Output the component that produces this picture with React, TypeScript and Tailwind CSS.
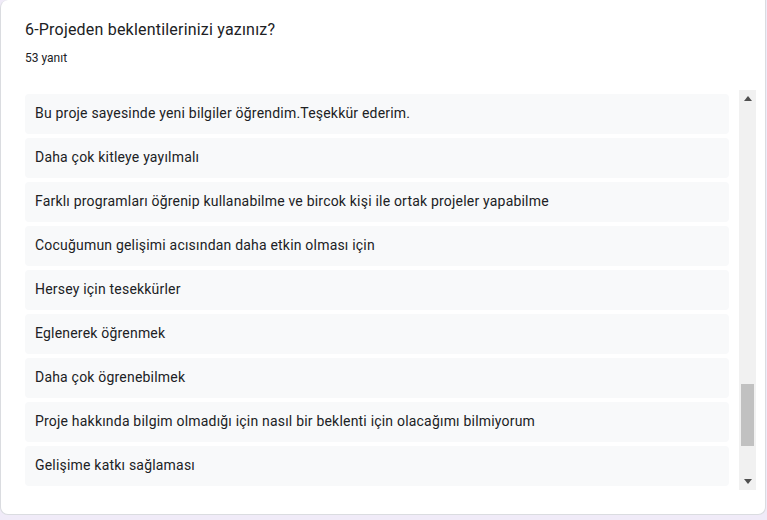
import React from "react";

const answers = [
  "Bu proje sayesinde yeni bilgiler öğrendim.Teşekkür ederim.",
  "Daha çok kitleye yayılmalı",
  "Farklı programları öğrenip kullanabilme ve bircok kişi ile ortak projeler yapabilme",
  "Cocuğumun gelişimi acısından daha etkin olması için",
  "Hersey için tesekkürler",
  "Eglenerek öğrenmek",
  "Daha çok ögrenebilmek",
  "Proje hakkında bilgim olmadığı için nasıl bir beklenti için olacağımı bilmiyorum",
  "Gelişime katkı sağlaması",
];

export default function App() {
  return (
    <div className="w-[767px] h-[520px] bg-[#f0ebf8] overflow-hidden" style={{ fontFamily: "Roboto, 'Liberation Sans', sans-serif" }}>
      <div className="w-[766px] h-[515px] bg-white border border-[#dadce0] border-t-0 rounded-b-lg rounded-tl-lg flex flex-col">
        <div className="pl-[24px] pt-[18px]">
          <div className="text-[16px] leading-[24px] text-[#202124] tracking-[0.2px]">
            6-Projeden beklentilerinizi yazınız?
          </div>
          <div className="text-[12px] leading-[16px] text-[#202124] mt-[8px]">53 yanıt</div>
        </div>
        <div className="flex mt-[24px] pl-[24px] pr-[9px] h-[400px]">
          <div className="flex-1 flex flex-col gap-[4px] pt-[4px] pr-[10px]">
            {answers.map((a) => (
              <div key={a} className="h-[40px] rounded-[4px] bg-[#f8f9fa] flex items-center pl-[10px] pb-[1px] text-[14px] text-[#202124] tracking-[0.2px]">
                {a}
              </div>
            ))}
          </div>
          <div className="w-[17px] h-[400px] bg-[#f1f1f1] flex flex-col items-center">
            <div className="h-[17px] flex items-center justify-center">
              <svg width="8" height="5" viewBox="0 0 8 5"><path d="M4 0 L8 5 L0 5 Z" fill="#505050" /></svg>
            </div>
            <div className="flex-1 w-full flex flex-col justify-end pb-[27px] px-[2px]">
              <div className="h-[62px] w-full bg-[#c1c1c1]" />
            </div>
            <div className="h-[17px] flex items-center justify-center">
              <svg width="8" height="5" viewBox="0 0 8 5"><path d="M0 0 L8 0 L4 5 Z" fill="#505050" /></svg>
            </div>
          </div>
        </div>
      </div>
    </div>
  );
}
